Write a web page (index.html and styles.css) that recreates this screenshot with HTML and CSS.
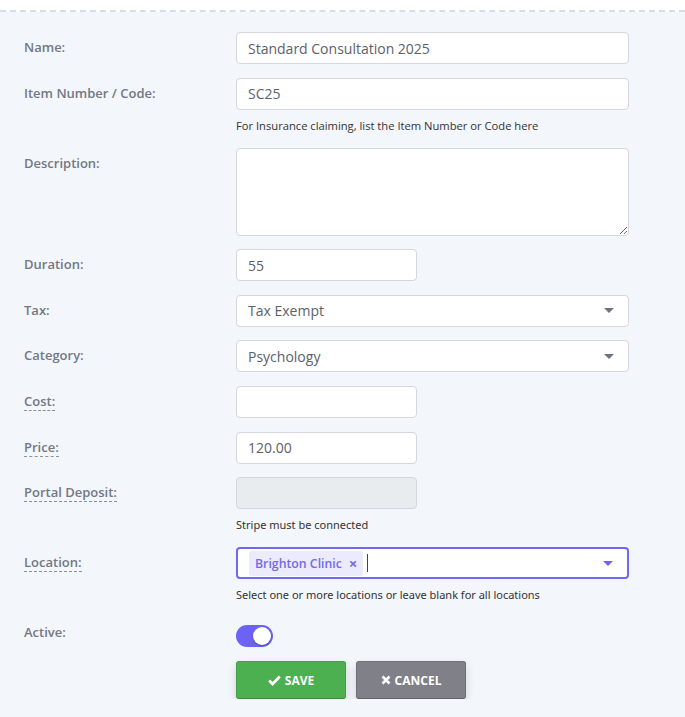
FILE: index.html
```html
<!DOCTYPE html>
<html lang="en">
<head>
    <meta charset="UTF-8">
    <meta name="viewport" content="width=device-width, initial-scale=1.0">
    <title>Edit Service</title>
    <link rel="stylesheet" href="styles.css">
</head>
<body>
    <div class="top-band"></div>
    <form class="service-form">
        <div class="form-row">
            <label class="form-label">Name:</label>
            <div class="form-field">
                <input class="form-input" type="text" value="Standard Consultation 2025">
            </div>
        </div>
        <div class="form-row">
            <label class="form-label">Item Number / Code:</label>
            <div class="form-field">
                <input class="form-input" type="text" value="SC25">
                <p class="help-text">For Insurance claiming, list the Item Number or Code here</p>
            </div>
        </div>
        <div class="form-row">
            <label class="form-label">Description:</label>
            <div class="form-field">
                <textarea class="form-input form-textarea"></textarea>
            </div>
        </div>
        <div class="form-row">
            <label class="form-label">Duration:</label>
            <div class="form-field">
                <input class="form-input form-input--short" type="text" value="55">
            </div>
        </div>
        <div class="form-row">
            <label class="form-label">Tax:</label>
            <div class="form-field">
                <div class="form-input form-select">
                    <span>Tax Exempt</span>
                    <span class="caret"></span>
                </div>
            </div>
        </div>
        <div class="form-row">
            <label class="form-label">Category:</label>
            <div class="form-field">
                <div class="form-input form-select">
                    <span>Psychology</span>
                    <span class="caret"></span>
                </div>
            </div>
        </div>
        <div class="form-row">
            <label class="form-label"><span class="hint">Cost:</span></label>
            <div class="form-field">
                <input class="form-input form-input--short" type="text" value="">
            </div>
        </div>
        <div class="form-row">
            <label class="form-label"><span class="hint">Price:</span></label>
            <div class="form-field">
                <input class="form-input form-input--short" type="text" value="120.00">
            </div>
        </div>
        <div class="form-row">
            <label class="form-label"><span class="hint">Portal Deposit:</span></label>
            <div class="form-field">
                <input class="form-input form-input--short" type="text" value="" disabled>
                <p class="help-text help-text--alt">Stripe must be connected</p>
            </div>
        </div>
        <div class="form-row">
            <label class="form-label"><span class="hint">Location:</span></label>
            <div class="form-field">
                <div class="form-input form-select multi-select">
                    <span class="chips">
                        <span class="chip">Brighton Clinic <span class="chip-remove">&times;</span></span>
                        <span class="cursor"></span>
                    </span>
                    <span class="caret caret--active"></span>
                </div>
                <p class="help-text help-text--alt">Select one or more locations or leave blank for all locations</p>
            </div>
        </div>
        <div class="form-row form-row--toggle">
            <label class="form-label">Active:</label>
            <div class="form-field">
                <span class="toggle"><span class="toggle-knob"></span></span>
            </div>
        </div>
        <div class="form-actions">
            <button type="button" class="btn btn-save">
                <svg width="13" height="11" viewBox="0 0 13 11"><path d="M1.2 5.6 L4.6 9 L11.8 1.6" fill="none" stroke="#fff" stroke-width="2.8"/></svg>
                SAVE
            </button>
            <button type="button" class="btn btn-cancel">
                <svg width="10" height="10" viewBox="0 0 10 10"><path d="M1.5 1.5 L8.5 8.5 M8.5 1.5 L1.5 8.5" fill="none" stroke="#fff" stroke-width="2.6"/></svg>
                CANCEL
            </button>
        </div>
    </form>
</body>
</html>
```

FILE: styles.css
```css
body {
    margin: 0;
    background-color: #f3f6fb;
    font-family: 'Open Sans', sans-serif;
    color: #333;
}

.top-band {
    height: 10px;
    background-color: #ffffff;
    border-bottom: 2px dashed #d6dde7;
}

.service-form {
    padding: 20px 0 0 24px;
}

.form-row {
    display: flex;
    margin-bottom: 13.6px;
}

.form-label {
    width: 212px;
    flex-shrink: 0;
    padding-top: 6px;
    font-size: 13px;
    font-weight: 600;
    line-height: 18px;
    color: #737883;
}

.hint {
    border-bottom: 1px dashed #8a8f99;
}

.form-field {
    width: 393px;
}

.form-input {
    display: block;
    box-sizing: border-box;
    width: 100%;
    height: 32px;
    margin: 0;
    padding: 0 11px;
    font-family: 'Open Sans', sans-serif;
    font-size: 14px;
    color: #5c616b;
    background-color: #ffffff;
    border: 1px solid #d4d7dd;
    border-radius: 4px;
    outline: none;
}

.form-input--short {
    width: 181px;
}

.form-input:disabled {
    background-color: #e9ecef;
}

.form-textarea {
    height: 88px;
    resize: vertical;
}

.form-select {
    display: flex;
    align-items: center;
    justify-content: space-between;
}

.caret {
    width: 0;
    height: 0;
    margin-right: 3px;
    border-left: 5px solid transparent;
    border-right: 5px solid transparent;
    border-top: 5px solid #6b7484;
}

.caret--active {
    border-top-color: #6c63f5;
}

.multi-select {
    padding-left: 11px;
    border: 2px solid #7068f4;
}

.chips {
    display: flex;
    align-items: center;
}

.chip {
    display: inline-flex;
    align-items: center;
    height: 25px;
    padding: 0 6px;
    font-size: 12.3px;
    font-weight: 600;
    color: #7469e8;
    background-color: #ebebfd;
    border-radius: 3px;
}

.chip-remove {
    margin-left: 7px;
    font-size: 15px;
    font-weight: 700;
}

.cursor {
    width: 1px;
    height: 18px;
    margin-left: 4px;
    background-color: #444;
}

.help-text {
    margin: 8px 0 0;
    font-size: 11.2px;
    line-height: 16.5px;
    color: #333;
}

.help-text--alt {
    font-family: 'Noto Sans', sans-serif;
    font-size: 11px;
}

.form-row--toggle {
    margin-top: 19.5px;
    margin-bottom: 14px;
}

.form-row--toggle .form-label {
    padding-top: 0;
}

.toggle {
    display: block;
    position: relative;
    width: 37px;
    height: 22px;
    margin-top: 2px;
    background-color: #6c63f5;
    border-radius: 11px;
}

.toggle-knob {
    position: absolute;
    top: 2px;
    right: 2px;
    width: 18px;
    height: 18px;
    background-color: #ffffff;
    border-radius: 50%;
    box-shadow: 0 1px 2px rgba(0, 0, 0, 0.3);
}

.form-actions {
    display: flex;
    gap: 10px;
    margin-left: 212px;
}

.btn {
    display: flex;
    align-items: center;
    justify-content: center;
    gap: 4px;
    box-sizing: border-box;
    width: 110px;
    height: 38px;
    padding: 0;
    font-family: 'Open Sans', sans-serif;
    font-size: 12px;
    font-weight: 700;
    color: #ffffff;
    border: 1px solid transparent;
    border-radius: 3px;
    box-shadow: 0 4px 10px rgba(0, 0, 0, 0.15);
    cursor: pointer;
}

.btn-save {
    background-color: #4caf50;
    border-color: #43a047;
    border-bottom-color: #3b8e3f;
}

.btn-cancel {
    background-color: #808088;
    border-color: #6f6f77;
    border-bottom-color: #606068;
}
```
